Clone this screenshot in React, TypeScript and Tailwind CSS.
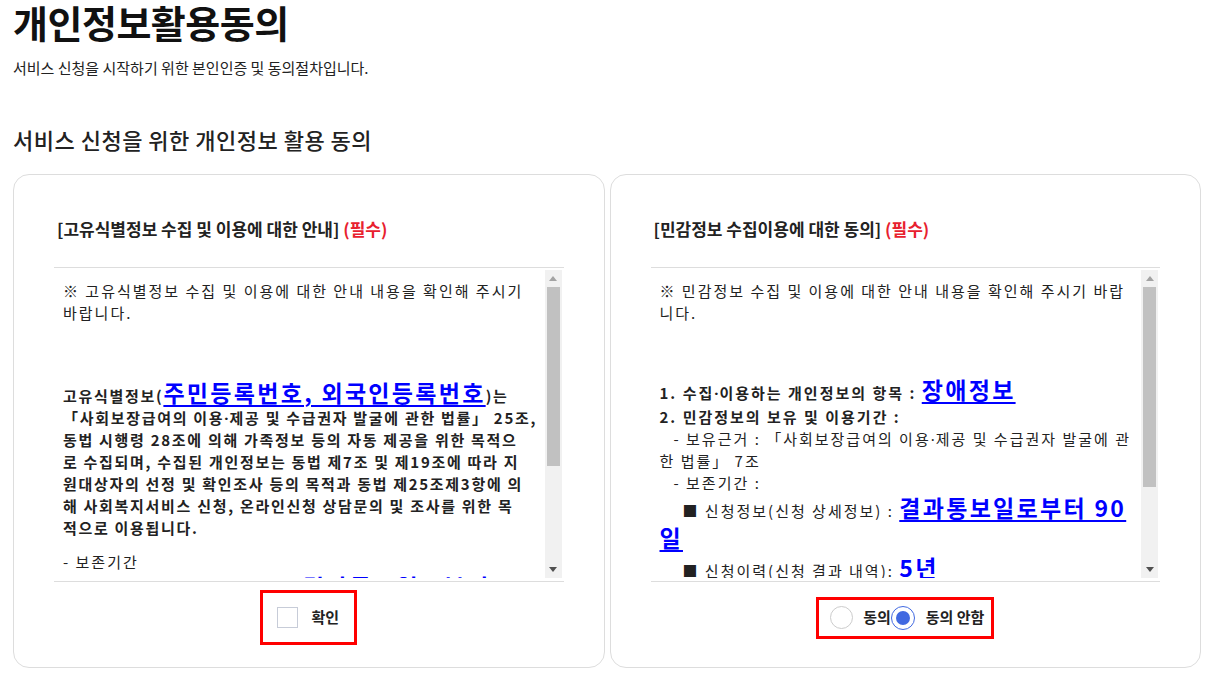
import type { ReactNode } from 'react';

const bodyText = 'text-[15px] leading-[22px] tracking-[2px] text-[#222]';

function BigLink({ children, leading = 'leading-[25px]' }: { children: ReactNode; leading?: string }) {
    return (
        <a className={`text-[23px] font-bold ${leading} tracking-[2.3px] text-[#0000ff] underline decoration-[2px] underline-offset-[3px]`}>
            {children}
        </a>
    );
}

// narrow middle dot, the CJK font draws it full width
function Dot() {
    return <span className="font-['Noto_Sans',sans-serif] tracking-[1px]">·</span>;
}

function Indent({ w }: { w: string }) {
    return <span className={`inline-block ${w}`} />;
}

// drawn scrollbar, the box is always shown scrolled to the top
function ScrollBar({ thumb }: { thumb: string }) {
    return (
        <div className="flex w-[17px] shrink-0 flex-col bg-[#f1f1f1]">
            <div className="flex h-[17px] items-center justify-center">
                <svg width="8" height="5" viewBox="0 0 8 5">
                    <path d="M0 5 L4 0 L8 5 Z" fill="#a3a3a3" />
                </svg>
            </div>
            <div className={`mx-[2px] bg-[#c1c1c1] ${thumb}`} />
            <div className="flex-1" />
            <div className="flex h-[17px] items-center justify-center">
                <svg width="8" height="5" viewBox="0 0 8 5">
                    <path d="M0 0 L8 0 L4 5 Z" fill="#505050" />
                </svg>
            </div>
        </div>
    );
}

function ScrollBox({ children, thumb }: { children: ReactNode; thumb: string }) {
    return (
        <div className="mt-[26px] border-y border-[#ddd] pt-[2px] pr-[2px] pb-[3px]">
            <div className="flex h-[308px]">
                <div className="min-w-0 flex-1 overflow-hidden pt-[10px] pl-[9px] pr-[9px]">{children}</div>
                <ScrollBar thumb={thumb} />
            </div>
        </div>
    );
}

function Card({ title, children, footer }: { title: string; children: ReactNode; footer: ReactNode }) {
    return (
        <section className="rounded-[16px] border border-[#ddd] bg-white px-[40px] pt-[42px] pb-[22px]">
            <h3 className="pl-[3px] text-[17px] font-bold leading-[24px] text-[#222]">
                {title} <span className="text-[#e8212e]">(필수)</span>
            </h3>
            {children}
            <div className="mt-[8px] flex h-[55px] items-center justify-center">{footer}</div>
        </section>
    );
}

function RetentionLines() {
    return (
        <>
            <div className="-mt-[2px]">
                <Indent w="w-[23px]" />■ 신청정보(신청 상세정보) : <BigLink leading="leading-[30px]">결과통보일로부터 90일</BigLink>
            </div>
            <div>
                <Indent w="w-[23px]" />■ 신청이력(신청 결과 내역): <BigLink leading="leading-[30px]">5년</BigLink>
            </div>
        </>
    );
}

export default function App() {
    return (
        <div className="min-h-screen bg-white pl-[13px] pr-[6px] font-['Noto_Sans_CJK_KR','Noto_Sans',sans-serif] text-[#111]">
            <h1 className="text-[38px] font-bold leading-[44px] tracking-[-0.5px] text-[#111]">개인정보활용동의</h1>
            <p className="mt-[14px] text-[15px] leading-[20px] text-[#222]">서비스 신청을 시작하기 위한 본인인증 및 동의절차입니다.</p>

            <h2 className="mt-[46px] text-[22px] font-medium leading-[30px] tracking-[0.5px] text-[#222]">서비스 신청을 위한 개인정보 활용 동의</h2>

            <div className="mt-[20px] grid grid-cols-2 gap-[5px]">
                <Card
                    title="[고유식별정보 수집 및 이용에 대한 안내]"
                    footer={
                        <label className="flex h-[55px] items-center gap-[13px] border-[3px] border-[#ff0000] pl-[14px] pr-[15px]">
                            <span className="h-[21px] w-[21px] border border-[#c7ccd8] bg-white" />
                            <span className="text-[15px] font-bold text-[#222]">확인</span>
                        </label>
                    }
                >
                    <ScrollBox thumb="h-[179px]">
                        <div className={bodyText}>
                            <p>※ 고유식별정보 수집 및 이용에 대한 안내 내용을 확인해 주시기 바랍니다.</p>
                            <p className="mt-[56px] whitespace-nowrap font-bold tracking-[1.7px]">
                                고유식별정보(<BigLink>주민등록번호, 외국인등록번호</BigLink>)는
                                <br />
                                「사회보장급여의 이용<Dot />제공 및 수급권자 발굴에 관한 법률」 25조,
                                <br />
                                동법 시행령 28조에 의해 가족정보 등의 자동 제공을 위한 목적으
                                <br />
                                로 수집되며, 수집된 개인정보는 동법 제7조 및 제19조에 따라 지
                                <br />
                                원대상자의 선정 및 확인조사 등의 목적과 동법 제25조제3항에 의
                                <br />
                                해 사회복지서비스 신청, 온라인신청 상담문의 및 조사를 위한 목
                                <br />
                                적으로 이용됩니다.
                            </p>
                            <p className="mt-[12px]">- 보존기간</p>
                            <RetentionLines />
                        </div>
                    </ScrollBox>
                </Card>

                <Card
                    title="[민감정보 수집이용에 대한 동의]"
                    footer={
                        <div className="flex h-[42px] items-center border-[3px] border-[#ff0000] pl-[11px] pr-[7px]">
                            <span className="h-[23px] w-[23px] rounded-full border border-[#cccccc] bg-white" />
                            <span className="ml-[10px] text-[15px] font-bold text-[#222]">동의</span>
                            <span className="flex h-[24px] w-[24px] items-center justify-center rounded-full border border-[#4169e1] bg-white">
                                <span className="h-[14px] w-[14px] rounded-full bg-[#4169e1]" />
                            </span>
                            <span className="ml-[11px] text-[15px] font-bold text-[#222]">동의 안함</span>
                        </div>
                    }
                >
                    <ScrollBox thumb="h-[200px]">
                        <div className={bodyText}>
                            <p>※ 민감정보 수집 및 이용에 대한 안내 내용을 확인해 주시기 바랍니다.</p>
                            <p className="mt-[53px] font-bold">
                                1. 수집<Dot />이용하는 개인정보의 항목 : <BigLink>장애정보</BigLink>
                            </p>
                            <p className="mt-[2px] font-bold">2. 민감정보의 보유 및 이용기간 :</p>
                            <p>
                                <Indent w="w-[14px]" />- 보유근거 : 「사회보장급여의 이용<Dot />제공 및 수급권자 발굴에 관한 법률」 7조
                            </p>
                            <p>
                                <Indent w="w-[14px]" />- 보존기간 :
                            </p>
                            <RetentionLines />
                        </div>
                    </ScrollBox>
                </Card>
            </div>
        </div>
    );
}
